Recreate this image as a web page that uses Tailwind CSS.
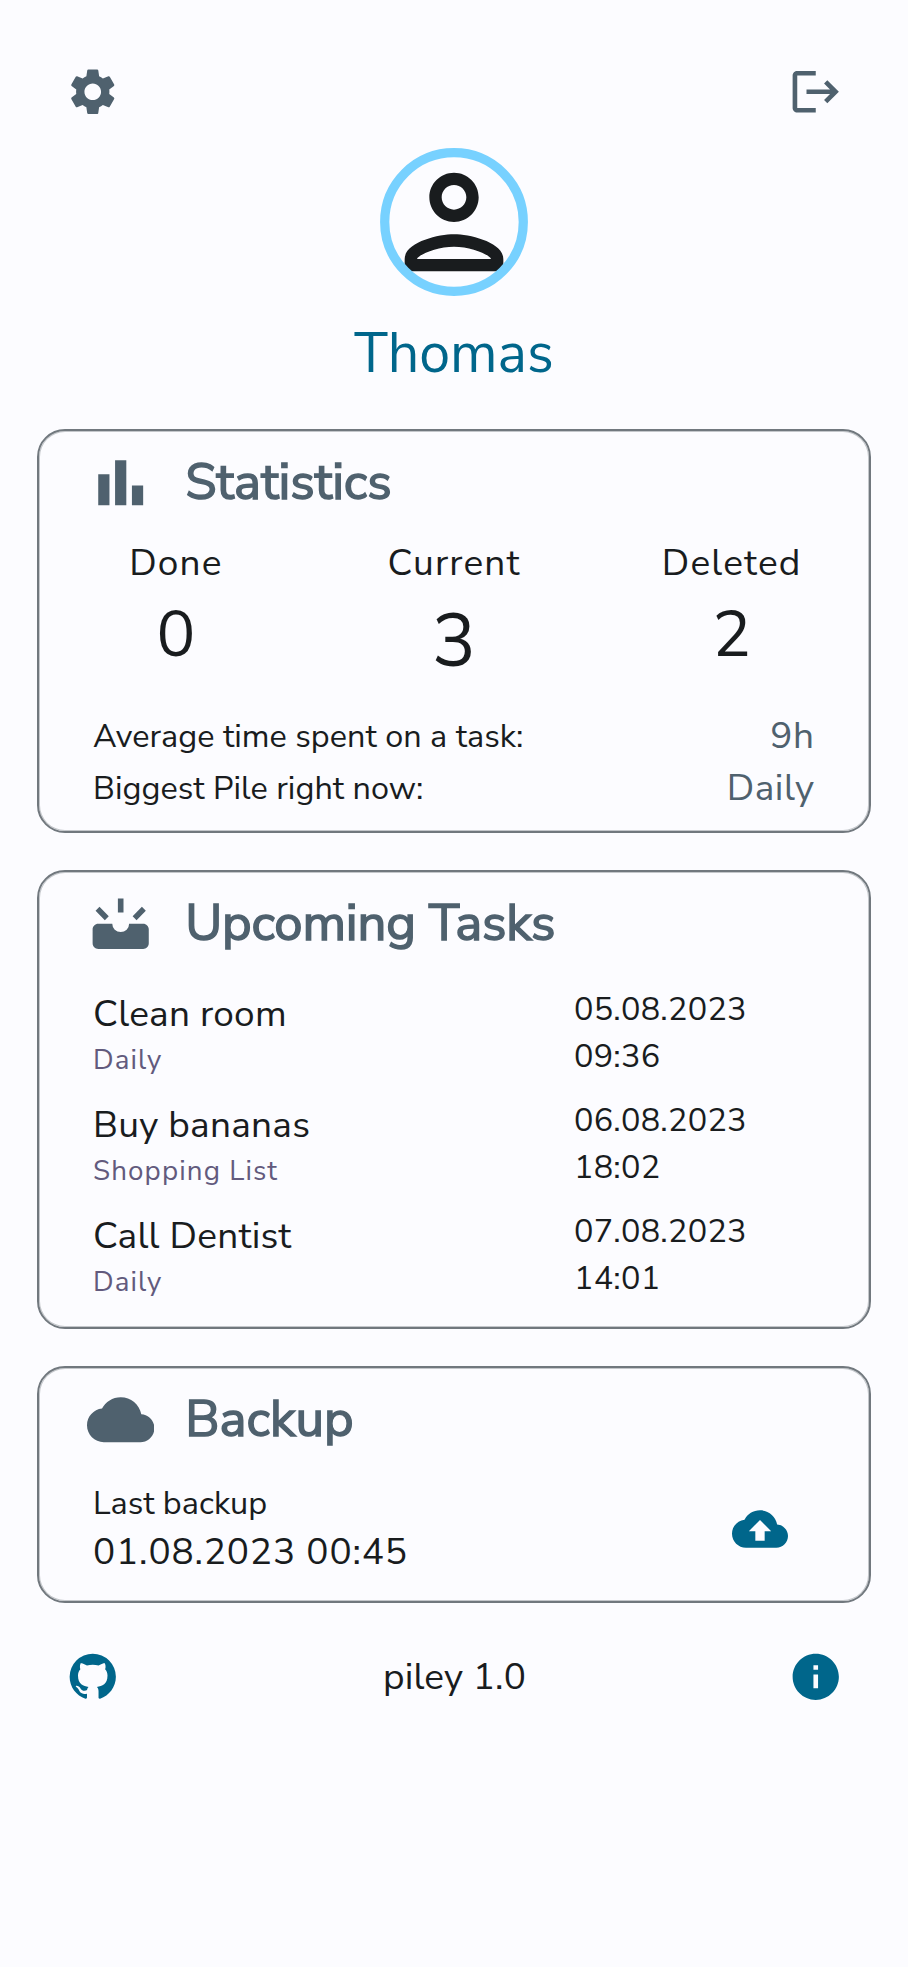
<!DOCTYPE html>
<html lang="en">
<head>
<meta charset="utf-8">
<title>piley</title>
<script src="https://cdn.jsdelivr.net/npm/@tailwindcss/browser@4"></script>
</head>
<body class="bg-[#fcfcff]">
<main class="flex h-[1967px] w-[908px] flex-col bg-[#fcfcff] font-['Nunito_Sans','Nunito','Lato',sans-serif] text-[#191c1e]">

  <header class="mt-[64px] flex items-center justify-between px-[64.5px] text-[#4f616e]">
    <svg class="size-[55.5px]" viewBox="0 0 24 24" fill="currentColor"><path d="M19.14 12.94c.04-.3.06-.61.06-.94 0-.32-.02-.64-.07-.94l2.03-1.58c.18-.14.23-.41.12-.61l-1.92-3.32c-.12-.22-.37-.29-.59-.22l-2.39.96c-.5-.38-1.03-.7-1.62-.94l-.36-2.54c-.04-.24-.24-.41-.48-.41h-3.84c-.24 0-.43.17-.47.41l-.36 2.54c-.59.24-1.13.57-1.62.94l-2.39-.96c-.22-.08-.47 0-.59.22L2.74 8.87c-.12.21-.08.47.12.61l2.03 1.58c-.05.3-.09.63-.09.94s.02.64.07.94l-2.03 1.58c-.18.14-.23.41-.12.61l1.92 3.32c.12.22.37.29.59.22l2.39-.96c.5.38 1.03.7 1.62.94l.36 2.54c.05.24.24.41.48.41h3.84c.24 0 .44-.17.47-.41l.36-2.54c.59-.24 1.13-.56 1.62-.94l2.39.96c.22.08.47 0 .59-.22l1.92-3.32c.12-.22.07-.47-.12-.61l-2.01-1.58zM12 15.6c-1.98 0-3.6-1.62-3.6-3.6s1.62-3.6 3.6-3.6 3.6 1.62 3.6 3.6-1.62 3.6-3.6 3.6z"/></svg>
    <svg class="size-[55.5px]" viewBox="0 0 24 24" fill="currentColor"><path d="m17 7-1.41 1.41L18.17 11H8v2h10.17l-2.58 2.58L17 17l5-5zM4 5h8V3H4c-1.1 0-2 .9-2 2v14c0 1.1.9 2 2 2h8v-2H4V5z"/></svg>
  </header>

  <section class="mt-[28.5px] flex flex-col items-center">
    <svg class="size-[148px]" viewBox="0 0 148 148">
      <defs><clipPath id="avatar"><circle cx="74" cy="74" r="70"/></clipPath></defs>
      <g clip-path="url(#avatar)"><path transform="scale(6.1667)" fill="#191c1e" d="M12 6c1.1 0 2 .9 2 2s-.9 2-2 2-2-.9-2-2 .9-2 2-2m0 10c2.7 0 5.8 1.29 6 2H6c.23-.72 3.31-2 6-2m0-12C9.79 4 8 5.79 8 8s1.79 4 4 4 4-1.79 4-4-1.79-4-4-4zm0 10c-2.67 0-8 1.34-8 4v2h16v-2c0-2.66-5.33-4-8-4z"/></g>
      <circle cx="74" cy="74" r="69.3" fill="none" stroke="#77d1ff" stroke-width="9.25"/>
    </svg>
    <h1 class="mt-[20.5px] text-[55.5px] leading-[74px] text-[#00668b]">Thomas</h1>
  </section>

  <section class="mx-[37px] mt-[38px] h-[404px] rounded-[28px] border-2 border-[#71787e] inset-ring-1 inset-ring-[#71787e]/40">
    <div class="mt-[18px] flex h-[67.4px] items-center gap-[31px] pl-[47.8px] text-[#4f616e]">
      <svg class="size-[67.4px]" viewBox="0 0 24 24" fill="currentColor"><path d="M4 9h4v11H4zm12 4h4v7h-4zm-6-9h4v16h-4z"/></svg>
      <h2 class="text-[50.9px] leading-[65px] tracking-[-0.1px] [-webkit-text-stroke:1.5px_#4f616e]">Statistics</h2>
    </div>
    <div class="-mx-[1.5px] mt-[20.5px] grid grid-cols-3 text-center">
      <div class="-ml-[1px]">
        <p class="h-[60px] text-[37px] leading-[55.5px] tracking-[1.15px]">Done</p>
        <p class="text-[64.75px] leading-[78px]">0</p>
      </div>
      <div>
        <p class="h-[60px] text-[37px] leading-[55.5px] tracking-[1.15px]">Current</p>
        <p class="text-[74px] leading-[92.5px]">3</p>
      </div>
      <div>
        <p class="h-[60px] text-[37px] leading-[55.5px] tracking-[1.15px]">Deleted</p>
        <p class="text-[64.75px] leading-[78px]">2</p>
      </div>
    </div>
    <dl class="mt-[21.5px] pr-[54.5px] pl-[54px]">
      <div class="flex h-[52px] items-center justify-between">
        <dt class="text-[32.4px] leading-[46px] tracking-[0.04px]">Average time spent on a task:</dt>
        <dd class="text-[37px] leading-[54px] tracking-[0.5px] text-[#4f616e]">9h</dd>
      </div>
      <div class="flex h-[52px] items-center justify-between">
        <dt class="text-[32.4px] leading-[46px] tracking-[0.04px]">Biggest Pile right now:</dt>
        <dd class="text-[37px] leading-[54px] tracking-[0.5px] text-[#4f616e]">Daily</dd>
      </div>
    </dl>
  </section>

  <section class="mx-[37px] mt-[37px] h-[459px] rounded-[28px] border-2 border-[#71787e] inset-ring-1 inset-ring-[#71787e]/40">
    <div class="mt-[18px] flex h-[67.4px] items-center gap-[31px] pl-[47.8px] text-[#4f616e]">
      <svg class="size-[67.4px]" viewBox="0 0 24 24" fill="currentColor"><path d="M11 3h2v5h-2zM3.05 7.4 4.45 6l3.3 3.35-1.4 1.4zM20.95 7.4 19.55 6l-3.3 3.35 1.4 1.4zM20 12h-5a3 3 0 0 1-6 0H4c-1.1 0-2 .9-2 2v5c0 1.1.9 2 2 2h16c1.1 0 2-.9 2-2v-5c0-1.1-.9-2-2-2z"/></svg>
      <h2 class="text-[50.9px] leading-[65px] tracking-[-0.2px] [-webkit-text-stroke:1.5px_#4f616e]">Upcoming Tasks</h2>
    </div>
    <ul class="mt-[29.6px] flex flex-col gap-[18px] pr-[53px] pl-[54px]">
      <li class="flex justify-between">
        <div>
          <p class="text-[37px] leading-[56px] tracking-[0.25px]">Clean room</p>
          <p class="text-[27.75px] leading-[37px] tracking-[1.12px] text-[#625a7d]">Daily</p>
        </div>
        <p class="w-[242px] text-[32.4px] leading-[46.5px] tracking-[0.25px]">05.08.2023<br>09:36</p>
      </li>
      <li class="flex justify-between">
        <div>
          <p class="text-[37px] leading-[56px] tracking-[0.25px]">Buy bananas</p>
          <p class="text-[27.75px] leading-[37px] tracking-[1.12px] text-[#625a7d]">Shopping List</p>
        </div>
        <p class="w-[242px] text-[32.4px] leading-[46.5px] tracking-[0.25px]">06.08.2023<br>18:02</p>
      </li>
      <li class="flex justify-between">
        <div>
          <p class="text-[37px] leading-[56px] tracking-[0.25px]">Call Dentist</p>
          <p class="text-[27.75px] leading-[37px] tracking-[1.12px] text-[#625a7d]">Daily</p>
        </div>
        <p class="w-[242px] text-[32.4px] leading-[46.5px] tracking-[0.25px]">07.08.2023<br>14:01</p>
      </li>
    </ul>
  </section>

  <section class="mx-[37px] mt-[37px] h-[237px] rounded-[28px] border-2 border-[#71787e] inset-ring-1 inset-ring-[#71787e]/40">
    <div class="mt-[18px] flex h-[67.4px] items-center gap-[31px] pl-[47.8px] text-[#4f616e]">
      <svg class="size-[67.4px]" viewBox="0 0 24 24" fill="currentColor"><path d="M19.35 10.04C18.67 6.59 15.64 4 12 4 9.11 4 6.6 5.64 5.35 8.04 2.34 8.36 0 10.91 0 14c0 3.31 2.69 6 6 6h13c2.76 0 5-2.24 5-5 0-2.64-2.05-4.78-4.65-4.96z"/></svg>
      <h2 class="text-[50.9px] leading-[65px] [-webkit-text-stroke:1.5px_#4f616e]">Backup</h2>
    </div>
    <div class="mt-[27.6px] flex items-center justify-between pr-[81px] pl-[54px]">
      <div>
        <p class="text-[32.4px] leading-[46.5px]">Last backup</p>
        <p class="text-[37px] leading-[51px] tracking-[0.85px]">01.08.2023 00:45</p>
      </div>
      <svg class="size-[56px] text-[#00668b]" viewBox="0 0 24 24" fill="currentColor"><path d="M19.35 10.04C18.67 6.59 15.64 4 12 4 9.11 4 6.6 5.64 5.35 8.04 2.34 8.36 0 10.91 0 14c0 3.31 2.69 6 6 6h13c2.76 0 5-2.24 5-5 0-2.64-2.05-4.78-4.65-4.96zM14 13v4h-4v-4H7.2L12 8.1l4.8 4.9H14z"/></svg>
    </div>
  </section>

  <footer class="mt-[46.5px] flex items-center justify-between px-[64.5px]">
    <svg class="size-[55.5px] text-[#00668b]" viewBox="0 0 24 24" fill="currentColor"><path d="M12 2A10 10 0 0 0 2 12c0 4.42 2.87 8.17 6.84 9.5.5.08.66-.23.66-.5v-1.69c-2.77.6-3.36-1.34-3.36-1.34-.46-1.16-1.11-1.47-1.11-1.47-.91-.62.07-.6.07-.6 1 .07 1.53 1.03 1.53 1.03.87 1.52 2.34 1.07 2.91.83.09-.65.35-1.09.63-1.34-2.22-.25-4.55-1.11-4.55-4.92 0-1.11.38-2 1.03-2.71-.1-.25-.45-1.29.1-2.64 0 0 .84-.27 2.75 1.02.79-.22 1.65-.33 2.5-.33s1.71.11 2.5.33c1.91-1.29 2.75-1.02 2.75-1.02.55 1.35.2 2.39.1 2.64.65.71 1.03 1.6 1.03 2.71 0 3.82-2.34 4.66-4.57 4.91.36.31.69.92.69 1.85V21c0 .27.16.59.67.5C19.14 20.16 22 16.42 22 12A10 10 0 0 0 12 2z"/></svg>
    <p class="pt-[1px] pl-[1px] text-[37px] leading-[54px] tracking-[0.15px]">piley 1.0</p>
    <svg class="size-[55.5px] text-[#00668b]" viewBox="0 0 24 24" fill="currentColor"><path d="M12 2C6.48 2 2 6.48 2 12s4.48 10 10 10 10-4.48 10-10S17.52 2 12 2zm1 15h-2v-6h2v6zm0-8h-2V7h2v2z"/></svg>
  </footer>
</main>
</body>
</html>
